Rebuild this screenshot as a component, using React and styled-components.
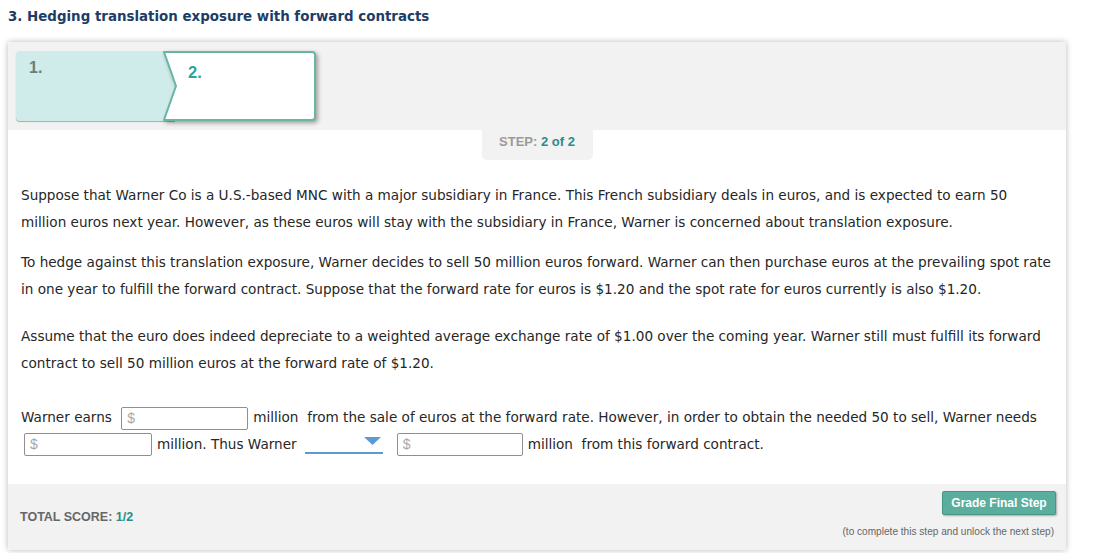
import React from "react";
import styled, { createGlobalStyle } from "styled-components";

const Global = createGlobalStyle`
  html, body { margin: 0; padding: 0; background: #fff; }
  body { font-family: "DejaVu Sans", Verdana, sans-serif; color: #222; }
  * { box-sizing: border-box; }
`;

const Page = styled.div`
  padding: 7px 38px 3px 8px;
`;

const Title = styled.h3`
  margin: 0 0 15px 0;
  font-size: 13.4px;
  font-weight: bold;
  color: #1d3d66;
  line-height: 20px;
`;

const Panel = styled.div`
  background: #fff;
  box-shadow: 0 0 6px rgba(0, 0, 0, 0.28);
  display: flex;
  flex-direction: column;
`;

const TabArea = styled.div`
  background: #f2f2f2;
  padding: 9px 8px 9px 8px;
  display: flex;
`;

const Tab1 = styled.div`
  width: 159px;
  height: 70px;
  background: #cfecea;
  border-radius: 4px 0 0 4px;
  box-shadow: 0 1px 1px rgba(0, 0, 0, 0.3);
  padding: 8px 0 0 13px;
  font-family: "Liberation Sans", Arial, sans-serif;
  font-weight: bold;
  font-size: 16px;
  color: #6c7c7a;
`;

const Tab2 = styled.div`
  position: relative;
  width: 153px;
  height: 70px;
  margin-left: -12px;
  padding: 12px 0 0 25px;
  font-family: "Liberation Sans", Arial, sans-serif;
  font-weight: bold;
  font-size: 16.5px;
  color: #2aa597;
`;

const TabShape = styled.svg`
  position: absolute;
  left: 0;
  top: 0;
  filter: drop-shadow(2px 2px 2px rgba(0, 0, 0, 0.35));
`;

const TabLabel = styled.span`
  position: relative;
`;

const StepRow = styled.div`
  display: flex;
  justify-content: center;
`;

const StepPill = styled.div`
  width: 111px;
  height: 30px;
  background: #f2f2f2;
  border-radius: 0 0 5px 5px;
  display: flex;
  align-items: center;
  justify-content: center;
  font-family: "Liberation Sans", Arial, sans-serif;
  font-weight: bold;
  font-size: 13px;
  color: #9a9a9a;
  padding-bottom: 8px;
`;

const Teal = styled.span`
  color: #2b8d84;
`;

const Body = styled.div`
  padding: 22px 13px 27px 13px;
  font-size: 13.6px;
  line-height: 26.5px;
  color: #262626;
`;

const Para = styled.p`
  margin: 0 0 ${(p) => p.$gap ?? 13}px 0;
`;

const Field = styled.span`
  display: inline-block;
  width: ${(p) => p.$w || 127}px;
  height: 23px;
  border: 1px solid #8f8f8f;
  border-radius: 2px;
  vertical-align: middle;
  margin: 0 5px 0 ${(p) => p.$ml ?? 3}px;
  padding: 0 0 0 5px;
  line-height: 21px;
  color: #a8a8a8;
  font-family: "Liberation Sans", Arial, sans-serif;
  font-size: 14px;
  background: #fff;
`;

const Select = styled.span`
  display: inline-flex;
  justify-content: flex-end;
  align-items: center;
  width: 78px;
  height: 22px;
  border-bottom: 2px solid #5b9bd1;
  vertical-align: middle;
  margin: 0 11px 0 8px;
  padding-right: 2px;
  position: relative;
  top: -2px;
`;

const Caret = styled.svg`
  display: block;
`;

const Footer = styled.div`
  background: #f2f2f2;
  display: flex;
  justify-content: space-between;
  padding: 7px 10px 6px 12px;
  height: 66px;
`;

const Score = styled.div`
  align-self: center;
  margin-top: -1px;
  font-family: "Liberation Sans", Arial, sans-serif;
  font-weight: bold;
  font-size: 12.5px;
  color: #666;
`;

const Right = styled.div`
  display: flex;
  flex-direction: column;
  align-items: flex-end;
`;

const GradeButton = styled.button`
  width: 114px;
  height: 24px;
  background: #5aae9e;
  border: 1px solid #4a9584;
  border-radius: 2px;
  color: #fff;
  font-family: "Liberation Sans", Arial, sans-serif;
  font-size: 12px;
  font-weight: bold;
  box-shadow: 1px 1px 2px rgba(0, 0, 0, 0.3);
  padding: 0;
  cursor: pointer;
`;

const Hint = styled.div`
  margin-top: 11px;
  margin-right: 2px;
  font-family: "Liberation Sans", Arial, sans-serif;
  font-size: 10.1px;
  color: #666;
`;

export default function App() {
  return (
    <>
      <Global />
      <Page>
        <Title>3. Hedging translation exposure with forward contracts</Title>
        <Panel>
          <TabArea>
            <Tab1>1.</Tab1>
            <Tab2>
              <TabShape width="156" height="74" viewBox="0 0 156 74">
                <path
                  d="M1 1 H149 Q152 1 152 4 V66 Q152 69 149 69 H1 L13 35 Z"
                  fill="#fff"
                  stroke="#6ab4a2"
                  strokeWidth="2"
                  strokeLinejoin="round"
                />
              </TabShape>
              <TabLabel>2.</TabLabel>
            </Tab2>
          </TabArea>
          <StepRow>
            <StepPill>
              STEP:&nbsp;<Teal>2 of 2</Teal>
            </StepPill>
          </StepRow>
          <Body>
            <Para $gap={14}>
              Suppose that Warner Co is a U.S.-based MNC with a major subsidiary in France. This French subsidiary deals in euros, and is expected to earn 50 million euros next year. However, as these euros will stay with the subsidiary in France, Warner is concerned about translation exposure.
            </Para>
            <Para $gap={21}>
              To hedge against this translation exposure, Warner decides to sell 50 million euros forward. Warner can then purchase euros at the prevailing spot rate in one year to fulfill the forward contract. Suppose that the forward rate for euros is $1.20 and the spot rate for euros currently is also $1.20.
            </Para>
            <Para $gap={28}>
              Assume that the euro does indeed depreciate to a weighted average exchange rate of $1.00 over the coming year. Warner still must fulfill its forward contract to sell 50 million euros at the forward rate of $1.20.
            </Para>
            <Para $gap={0}>
              Warner earns <Field $ml={5}>$</Field>million&nbsp; from the sale of euros at the forward rate. However, in order to obtain the needed 50 to sell, Warner needs{" "}
              <Field $w={128}>$</Field>million. Thus Warner
              <Select>
                <Caret width="17" height="9" viewBox="0 0 17 9">
                  <path d="M0 0 H17 L8.5 8 Z" fill="#5b9bd1" />
                </Caret>
              </Select>
              <Field $w={126}>$</Field>million&nbsp; from this forward contract.
            </Para>
          </Body>
          <Footer>
            <Score>
              TOTAL SCORE: <Teal>1/2</Teal>
            </Score>
            <Right>
              <GradeButton>Grade Final Step</GradeButton>
              <Hint>(to complete this step and unlock the next step)</Hint>
            </Right>
          </Footer>
        </Panel>
      </Page>
    </>
  );
}
